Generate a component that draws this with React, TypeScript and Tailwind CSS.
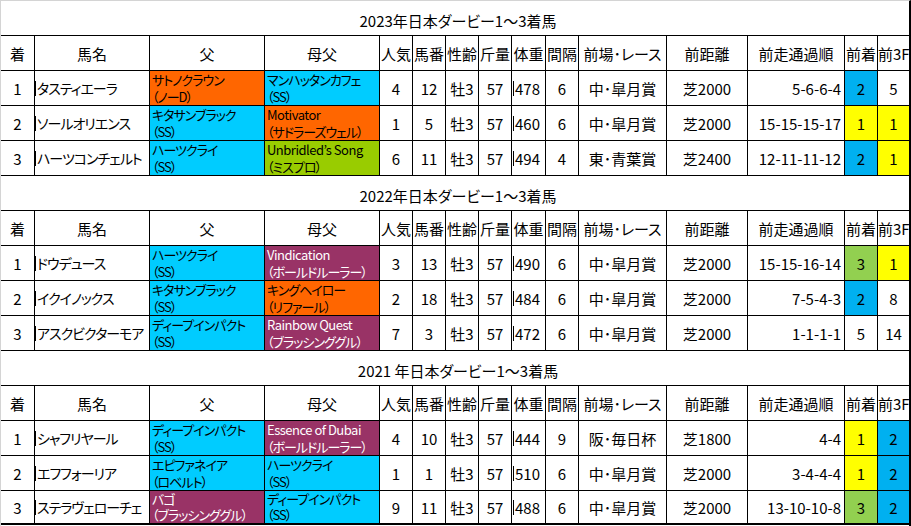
import React from 'react';

type Sire = { name: string; sub: string; color: string };
type Row = {
  rank: string;
  horse: string;
  sire: Sire;
  dam: Sire;
  pop: string;
  num: string;
  age: string;
  kin: string;
  weight: string;
  gap: string;
  race: string;
  dist: string;
  pass: string;
  prev: string;
  prevColor: string;
  f3: string;
  f3Color: string;
};

const ORANGE = 'bg-[#ff6600] text-black';
const CYAN = 'bg-[#00ccff] text-black';
const PURPLE = 'bg-[#993366] text-white';
const LIME = 'bg-[#99cc00] text-black';
const BLUE = 'bg-[#00b0f0]';
const YELLOW = 'bg-[#ffff00]';
const GREEN = 'bg-[#92d050]';
const WHITE = 'bg-white';

const sections: { title: string; rows: Row[] }[] = [
  {
    title: '2023年日本ダービー1～3着馬',
    rows: [
      { rank: '1', horse: 'タスティエーラ', sire: { name: 'サトノクラウン', sub: '（ノーD）', color: ORANGE }, dam: { name: 'マンハッタンカフェ', sub: '（SS）', color: CYAN }, pop: '4', num: '12', age: '牡3', kin: '57', weight: '478', gap: '6', race: '中･皐月賞', dist: '芝2000', pass: '5-6-6-4', prev: '2', prevColor: BLUE, f3: '5', f3Color: WHITE },
      { rank: '2', horse: 'ソールオリエンス', sire: { name: 'キタサンブラック', sub: '（SS）', color: CYAN }, dam: { name: 'Motivator', sub: '（サドラーズウェル）', color: ORANGE }, pop: '1', num: '5', age: '牡3', kin: '57', weight: '460', gap: '6', race: '中･皐月賞', dist: '芝2000', pass: '15-15-15-17', prev: '1', prevColor: YELLOW, f3: '1', f3Color: YELLOW },
      { rank: '3', horse: 'ハーツコンチェルト', sire: { name: 'ハーツクライ', sub: '（SS）', color: CYAN }, dam: { name: 'Unbridled’s Song', sub: '（ミスプロ）', color: LIME }, pop: '6', num: '11', age: '牡3', kin: '57', weight: '494', gap: '4', race: '東･青葉賞', dist: '芝2400', pass: '12-11-11-12', prev: '2', prevColor: BLUE, f3: '1', f3Color: YELLOW },
    ],
  },
  {
    title: '2022年日本ダービー1～3着馬',
    rows: [
      { rank: '1', horse: 'ドウデュース', sire: { name: 'ハーツクライ', sub: '（SS）', color: CYAN }, dam: { name: 'Vindication', sub: '（ボールドルーラー）', color: PURPLE }, pop: '3', num: '13', age: '牡3', kin: '57', weight: '490', gap: '6', race: '中･皐月賞', dist: '芝2000', pass: '15-15-16-14', prev: '3', prevColor: GREEN, f3: '1', f3Color: YELLOW },
      { rank: '2', horse: 'イクイノックス', sire: { name: 'キタサンブラック', sub: '（SS）', color: CYAN }, dam: { name: 'キングヘイロー', sub: '（リファール）', color: ORANGE }, pop: '2', num: '18', age: '牡3', kin: '57', weight: '484', gap: '6', race: '中･皐月賞', dist: '芝2000', pass: '7-5-4-3', prev: '2', prevColor: BLUE, f3: '8', f3Color: WHITE },
      { rank: '3', horse: 'アスクビクターモア', sire: { name: 'ディープインパクト', sub: '（SS）', color: CYAN }, dam: { name: 'Rainbow Quest', sub: '（ブラッシンググル）', color: PURPLE }, pop: '7', num: '3', age: '牡3', kin: '57', weight: '472', gap: '6', race: '中･皐月賞', dist: '芝2000', pass: '1-1-1-1', prev: '5', prevColor: WHITE, f3: '14', f3Color: WHITE },
    ],
  },
  {
    title: '2021 年日本ダービー1～3着馬',
    rows: [
      { rank: '1', horse: 'シャフリヤール', sire: { name: 'ディープインパクト', sub: '（SS）', color: CYAN }, dam: { name: 'Essence of Dubai', sub: '（ボールドルーラー）', color: PURPLE }, pop: '4', num: '10', age: '牡3', kin: '57', weight: '444', gap: '9', race: '阪･毎日杯', dist: '芝1800', pass: '4-4', prev: '1', prevColor: YELLOW, f3: '2', f3Color: BLUE },
      { rank: '2', horse: 'エフフォーリア', sire: { name: 'エピファネイア', sub: '（ロベルト）', color: CYAN }, dam: { name: 'ハーツクライ', sub: '（SS）', color: CYAN }, pop: '1', num: '1', age: '牡3', kin: '57', weight: '510', gap: '6', race: '中･皐月賞', dist: '芝2000', pass: '3-4-4-4', prev: '1', prevColor: YELLOW, f3: '2', f3Color: BLUE },
      { rank: '3', horse: 'ステラヴェローチェ', sire: { name: 'バゴ', sub: '（ブラッシンググル）', color: PURPLE }, dam: { name: 'ディープインパクト', sub: '（SS）', color: CYAN }, pop: '9', num: '11', age: '牡3', kin: '57', weight: '488', gap: '6', race: '中･皐月賞', dist: '芝2000', pass: '13-10-10-8', prev: '3', prevColor: GREEN, f3: '2', f3Color: BLUE },
    ],
  },
];

const headers = ['着', '馬名', '父', '母父', '人気', '馬番', '性齢', '斤量', '体重', '間隔', '前場･レース', '前距離', '前走通過順', '前着', '前3F'];

const isLatin = (t: string) => /^[A-Za-z]/.test(t);

const Center: React.FC<{ children: React.ReactNode; bg?: string }> = ({ children, bg = WHITE }) => (
  <div className={`${bg} flex items-center justify-center overflow-hidden whitespace-nowrap`}>{children}</div>
);

const Barred: React.FC<{ children: React.ReactNode; cls: string }> = ({ children, cls }) => (
  <div className={`bg-white flex items-center overflow-hidden whitespace-nowrap ${cls}`}>
    <span className="w-px h-[15px] bg-black mr-px shrink-0" />
    {children}
  </div>
);

// two-line pedigree cell: name / (sire line)
const Pedigree: React.FC<{ s: Sire; short?: boolean }> = ({ s, short }) => (
  <div
    className={`${s.color} flex flex-col pl-[2px] text-[13px] overflow-hidden whitespace-nowrap ${
      short ? 'leading-[16px]' : 'leading-[17px]'
    }`}
  >
    <span className={isLatin(s.name) ? 'tracking-[-0.5px]' : 'tracking-[-1px]'}>{s.name}</span>
    <span className="tracking-[-1px]">{s.sub}</span>
  </div>
);

const Section: React.FC<{ title: string; rows: Row[]; last?: boolean }> = ({ title, rows, last }) => (
  <div
    className={`grid grid-cols-[33px_114px_114px_114px_32px_32px_32px_32px_33px_32px_87px_80px_96px_32px_31px] gap-px bg-black border-black ${
      last ? 'grid-rows-[34px_34px_34px_34px_32px] border-b-2' : 'grid-rows-[34px_34px_34px_34px_34px] border-b'
    }`}
  >
    <div className="col-span-full bg-white flex items-center justify-center pt-[5px] pl-[6px]">{title}</div>
    {headers.map((h, i) => (
      <div key={i} className={`bg-white flex items-center overflow-hidden whitespace-nowrap ${i === 14 ? 'justify-start' : 'justify-center'}`}>
        {h}
      </div>
    ))}
    {rows.map((r, i) => {
      const short = last && i === rows.length - 1;
      return (
        <React.Fragment key={i}>
          <Center>{r.rank}</Center>
          <Barred cls="text-[14px] tracking-[-1px]">{r.horse}</Barred>
          <Pedigree s={r.sire} short={short} />
          <Pedigree s={r.dam} short={short} />
          <Center>{r.pop}</Center>
          <Center>{r.num}</Center>
          <Center>{r.age}</Center>
          <Center>{r.kin}</Center>
          <Barred cls="pl-[1px]">{r.weight}</Barred>
          <Center>{r.gap}</Center>
          <Center>{r.race}</Center>
          <Center>{r.dist}</Center>
          <div className="bg-white flex items-center justify-end pr-[3px] whitespace-nowrap">{r.pass}</div>
          <Center bg={r.prevColor}>{r.prev}</Center>
          <Center bg={r.f3Color}>{r.f3}</Center>
        </React.Fragment>
      );
    })}
  </div>
);

export default function App() {
  return (
    <div className="w-[911px] h-[526px] bg-white border-t border-l border-r-2 border-[#d4d4d4] border-r-black overflow-hidden text-black text-[15px] leading-[17px] font-['Noto_Sans_CJK_JP','Noto_Sans_CJK_SC',sans-serif] [font-feature-settings:'palt']">
      {sections.map((s, i) => (
        <Section key={i} title={s.title} rows={s.rows} last={i === sections.length - 1} />
      ))}
    </div>
  );
}
